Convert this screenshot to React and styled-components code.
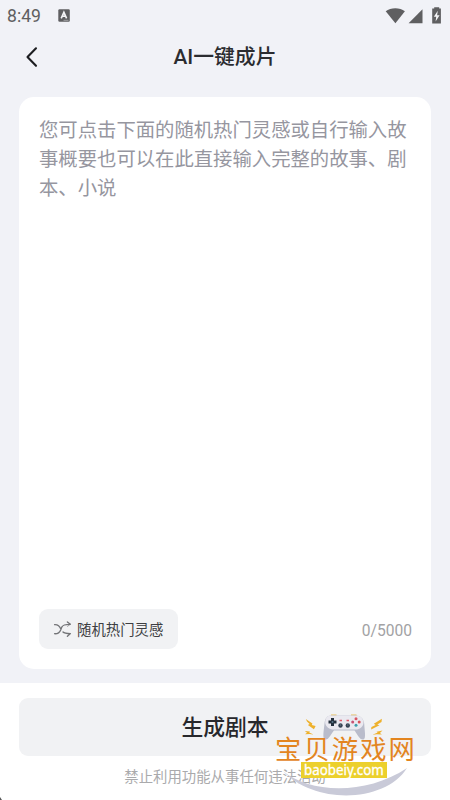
import React from "react";
import styled, { createGlobalStyle } from "styled-components";

const GlobalStyle = createGlobalStyle`
  * { box-sizing: border-box; }
  body { margin: 0; background: #f1f2f7; }
  button { border: 0; padding: 0; font-family: inherit; }
`;

const Screen = styled.main`
  position: relative;
  display: flex;
  flex-direction: column;
  width: 450px;
  height: 800px;
  overflow: hidden;
  background: #f1f2f7;
  font-family: Roboto, "Noto Sans CJK SC", sans-serif;
`;

const StatusBar = styled.div`
  display: flex;
  align-items: center;
  height: 31px;
  padding: 0 7px 0 7px;
  color: #5f5f61;
`;

const Clock = styled.span`
  width: 51px;
  padding-top: 2px;
  font-size: 17.6px;
  line-height: 29px;
`;

const StatusIcons = styled.div`
  display: flex;
  margin-left: auto;
`;

const Header = styled.header`
  display: grid;
  grid-template-columns: 64px 1fr 64px;
  align-items: center;
  height: 50px;
`;

const BackButton = styled.button`
  display: flex;
  padding: 1px 0 0 24px;
  background: none;
`;

const Title = styled.h1`
  margin: 2px 0 0;
  color: #2b2c30;
  font-size: 20.8px;
  font-weight: 500;
  line-height: 30px;
  text-align: center;
  white-space: nowrap;
`;

const EditorCard = styled.section`
  display: flex;
  flex-direction: column;
  justify-content: space-between;
  height: 572px;
  margin: 16px 19px 0 19px;
  padding: 18px 19px 19px 20px;
  border-radius: 15px;
  background: #fff;
`;

const Placeholder = styled.p`
  width: 372px;
  margin: 0;
  color: #96969f;
  font-family: "Noto Sans CJK SC", sans-serif;
  font-size: 19.35px;
  font-weight: 400;
  line-height: 28.8px;
`;

const EditorFooter = styled.div`
  display: flex;
  align-items: center;
  justify-content: space-between;
`;

const InspirationButton = styled.button`
  display: flex;
  align-items: center;
  gap: 5px;
  width: 139px;
  height: 40px;
  margin-bottom: 1px;
  padding-left: 14px;
  border-radius: 9px;
  background: #f1f2f4;
  color: #3d3e42;
  font-size: 14.4px;
  line-height: 20px;
  white-space: nowrap;
`;

const InspirationLabel = styled.span`
  padding-top: 3px;
`;

const Counter = styled.span`
  padding-top: 2px;
  color: #a2a2a4;
  font-size: 15.6px;
  line-height: 20px;
`;

const BottomPanel = styled.footer`
  display: flex;
  flex: 1;
  flex-direction: column;
  align-items: center;
  margin-top: 14px;
  padding-top: 15px;
  background: #fff;
`;

const GenerateButton = styled.button`
  width: 412px;
  height: 58px;
  padding-top: 2px;
  border-radius: 9px;
  background: #f1f2f4;
  color: #27282c;
  font-size: 21.8px;
  font-weight: 500;
  line-height: 56px;
`;

const Notice = styled.p`
  margin: 12px 0 0;
  color: #aaaaac;
  font-size: 14.4px;
  font-weight: 400;
  line-height: 20px;
  white-space: nowrap;
`;

const Watermark = styled.aside`
  position: absolute;
  left: 270px;
  top: 708px;
  width: 150px;
  height: 90px;
`;

const WatermarkArt = styled.svg`
  position: absolute;
  inset: 0;
`;

const SiteName = styled.div`
  position: absolute;
  left: 5px;
  top: 26px;
  color: #e3851f;
  font-family: "Noto Sans CJK SC", sans-serif;
  font-size: 26.3px;
  font-weight: 400;
  letter-spacing: 2.1px;
  line-height: 27px;
  white-space: nowrap;
`;

const SiteAddress = styled.div`
  position: absolute;
  left: 31px;
  top: 54px;
  display: flex;
  justify-content: center;
  width: 86px;
  height: 16px;
  background: #ecd02c;
  color: #fff;
  font-family: "Noto Sans", sans-serif;
  font-size: 15px;
  font-weight: 400;
  line-height: 14px;
`;

const AddressText = styled.span`
  transform: scaleX(0.89);
  -webkit-text-stroke: 0.35px #fff;
`;

const ScreenCorner = styled.svg`
  position: absolute;
  left: 0;
  bottom: 0;
`;

function KeyboardBadge() {
  return (
    <svg width="12" height="14" viewBox="0 0 12 14">
      <rect x=".3" y=".2" width="11.5" height="12.6" rx="1.2" fill="#5f5f61" />
      <path d="M3.2 9.3 5.9 3.3 8.6 9.3M4.3 7.3h3.2" fill="none" stroke="#f5f5f7" strokeWidth="1.6" />
      <path d="M5.5 11.3h5" stroke="#b5b5b8" strokeWidth=".8" />
    </svg>
  );
}

function PhoneStatus() {
  return (
    <svg width="58" height="18" viewBox="385 6 58 18">
      <path d="M385.7 10.3c5-4.2 14.2-4.2 19.2 0L395.4 22.2Z" fill="#5f5f61" />
      <path d="M408.6 22.2 422.5 8.2v14Z" fill="#5f5f61" />
      <path d="M432.2 7.4h2V6.2h5v1.2h1.7v15h-8.7Z" fill="#5f5f61" />
      <path d="m437.8 9.8-4 6h2.4l-.6 4.8 4-6.3h-2.5Z" fill="#f4f4f6" />
    </svg>
  );
}

function ShuffleIcon() {
  return (
    <svg width="19" height="18" viewBox="0 0 19 18" fill="none" stroke="#737477" strokeWidth="1.35" strokeLinecap="round" strokeLinejoin="round">
      <path d="M1.6 4.6c3.6-.2 5 1.1 6.1 4.3M1.6 13.7c3.4.2 4.9-.8 6.1-3.8l.9-2.5c1.2-2.5 3-3.1 8.7-3.1l-2.9-2.4M10 12c1.3 1.4 3.2 1.6 7.4 1.6l-3 2.6" />
      <path d="m14.5 6.4 2.7-2.1" strokeWidth=".6" />
    </svg>
  );
}

function GameController() {
  return (
    <g transform="translate(0 -8)">
      <path d="M61 17v-2.5h5.5V17M81 17v-2.5h5.5V17" fill="#e7bd59" />
      <path d="M61 15.5h24.5c5 0 8 3 8.7 8 .2 6 2.2 15-.7 16-3.5 1-6.4-5.4-9-9H64c-3 3.6-5.5 10-9 9-3-1-1-10-.5-16 .5-5 2.5-8 6.5-8Z" fill="#b9bccb" />
      <path d="M61 15.5h24.5c5 0 8 3 8 7.5-.6 4-3.7 6.5-8 6.5H64c-5 0-8-2.5-8.8-6.5-.2-4.5 1.8-7.5 5.8-7.5Z" fill="#eae9f0" />
      <path d="M62.5 18v8M58.5 22h8" stroke="#24303d" strokeWidth="3" />
      <circle cx="62.5" cy="22" r="1" fill="#5b788b" />
      <circle cx="86" cy="18.8" r="1.5" fill="#d95662" />
      <circle cx="82.7" cy="22" r="1.5" fill="#c85073" />
      <circle cx="89.2" cy="22" r="1.5" fill="#d85157" />
      <circle cx="86" cy="25.2" r="1.5" fill="#3d9eac" />
      <path d="M69.5 20.5h2.5M76.5 20.5h2.5" stroke="#e05867" strokeWidth="1.3" />
      <circle cx="70.5" cy="25.5" r="2.2" fill="#354252" />
      <circle cx="77.8" cy="25.5" r="2.2" fill="#354252" />
      <circle cx="70.5" cy="25" r=".7" fill="#687686" />
      <circle cx="77.8" cy="25" r=".7" fill="#687686" />
    </g>
  );
}

function SiteWatermark() {
  return (
    <Watermark>
      <WatermarkArt width="150" height="90" viewBox="0 0 150 90">
        <path d="M13 63c26 22 82 25 124-3-22 35-92 37-124 3Z" fill="#c9cad8" />
        <g fill="#eeb12c">
          <path d="m35.8 11 6.6 4.4-.6 1.7 3.8 1-1 2-.7 1.2-6-4.4 1.7-.8-2.6-2.6Z" />
          <path d="m111.9 10.8-8.1 5 1.8 1.2-4.2 2-.3 2.6 8.4-4.3-2.2-.8 4.2-2.6Z" />
          <path d="m34.8 23 5.2.6-.8 1 4.3 2-4-.6-4.5.2 2-1.4ZM112.5 22.5l-6 1.2 1.2.8-5.2 2.2 4.4-.4 5 .1-2-1.3Z" />
        </g>
        <GameController />
      </WatermarkArt>
      <SiteName>宝贝游戏网</SiteName>
      <SiteAddress><AddressText>baobeiy.com</AddressText></SiteAddress>
    </Watermark>
  );
}

export default function App() {
  return (
    <>
      <GlobalStyle />
      <Screen>
        <StatusBar>
          <Clock>8:49</Clock>
          <KeyboardBadge />
          <StatusIcons><PhoneStatus /></StatusIcons>
        </StatusBar>
        <Header>
          <BackButton aria-label="返回">
            <svg width="15" height="22" viewBox="0 0 15 22">
              <path d="M12 2.3 3.5 11l8.5 8.8" fill="none" stroke="#1d1e21" strokeWidth="2.1" strokeLinecap="round" strokeLinejoin="round" />
            </svg>
          </BackButton>
          <Title>AI一键成片</Title>
        </Header>
        <EditorCard>
          <Placeholder>您可点击下面的随机热门灵感或自行输入故事概要也可以在此直接输入完整的故事、剧本、小说</Placeholder>
          <EditorFooter>
            <InspirationButton>
              <ShuffleIcon />
              <InspirationLabel>随机热门灵感</InspirationLabel>
            </InspirationButton>
            <Counter>0/5000</Counter>
          </EditorFooter>
        </EditorCard>
        <BottomPanel>
          <GenerateButton>生成剧本</GenerateButton>
          <Notice>禁止利用功能从事任何违法活动</Notice>
        </BottomPanel>
        <SiteWatermark />
        <ScreenCorner width="2" height="3" viewBox="0 0 2 3"><path d="M0 0 2 3H0Z" fill="#555" /></ScreenCorner>
      </Screen>
    </>
  );
}
